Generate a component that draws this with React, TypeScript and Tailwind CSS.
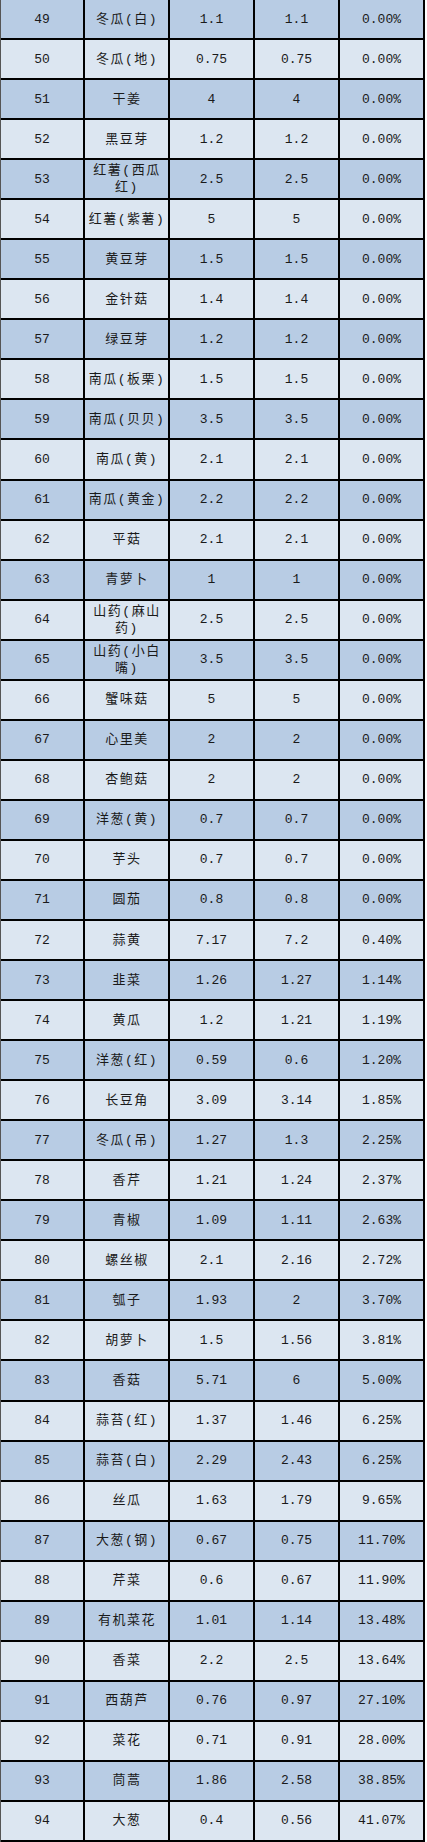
import React from 'react';

const rows: [number, string, string, string, string][] = [
  [49, '冬瓜(白)', '1.1', '1.1', '0.00%'],
  [50, '冬瓜(地)', '0.75', '0.75', '0.00%'],
  [51, '干姜', '4', '4', '0.00%'],
  [52, '黑豆芽', '1.2', '1.2', '0.00%'],
  [53, '红薯(西瓜红)', '2.5', '2.5', '0.00%'],
  [54, '红薯(紫薯)', '5', '5', '0.00%'],
  [55, '黄豆芽', '1.5', '1.5', '0.00%'],
  [56, '金针菇', '1.4', '1.4', '0.00%'],
  [57, '绿豆芽', '1.2', '1.2', '0.00%'],
  [58, '南瓜(板栗)', '1.5', '1.5', '0.00%'],
  [59, '南瓜(贝贝)', '3.5', '3.5', '0.00%'],
  [60, '南瓜(黄)', '2.1', '2.1', '0.00%'],
  [61, '南瓜(黄金)', '2.2', '2.2', '0.00%'],
  [62, '平菇', '2.1', '2.1', '0.00%'],
  [63, '青萝卜', '1', '1', '0.00%'],
  [64, '山药(麻山药)', '2.5', '2.5', '0.00%'],
  [65, '山药(小白嘴)', '3.5', '3.5', '0.00%'],
  [66, '蟹味菇', '5', '5', '0.00%'],
  [67, '心里美', '2', '2', '0.00%'],
  [68, '杏鲍菇', '2', '2', '0.00%'],
  [69, '洋葱(黄)', '0.7', '0.7', '0.00%'],
  [70, '芋头', '0.7', '0.7', '0.00%'],
  [71, '圆茄', '0.8', '0.8', '0.00%'],
  [72, '蒜黄', '7.17', '7.2', '0.40%'],
  [73, '韭菜', '1.26', '1.27', '1.14%'],
  [74, '黄瓜', '1.2', '1.21', '1.19%'],
  [75, '洋葱(红)', '0.59', '0.6', '1.20%'],
  [76, '长豆角', '3.09', '3.14', '1.85%'],
  [77, '冬瓜(吊)', '1.27', '1.3', '2.25%'],
  [78, '香芹', '1.21', '1.24', '2.37%'],
  [79, '青椒', '1.09', '1.11', '2.63%'],
  [80, '螺丝椒', '2.1', '2.16', '2.72%'],
  [81, '瓠子', '1.93', '2', '3.70%'],
  [82, '胡萝卜', '1.5', '1.56', '3.81%'],
  [83, '香菇', '5.71', '6', '5.00%'],
  [84, '蒜苔(红)', '1.37', '1.46', '6.25%'],
  [85, '蒜苔(白)', '2.29', '2.43', '6.25%'],
  [86, '丝瓜', '1.63', '1.79', '9.65%'],
  [87, '大葱(钢)', '0.67', '0.75', '11.70%'],
  [88, '芹菜', '0.6', '0.67', '11.90%'],
  [89, '有机菜花', '1.01', '1.14', '13.48%'],
  [90, '香菜', '2.2', '2.5', '13.64%'],
  [91, '西葫芦', '0.76', '0.97', '27.10%'],
  [92, '菜花', '0.71', '0.91', '28.00%'],
  [93, '茼蒿', '1.86', '2.58', '38.85%'],
  [94, '大葱', '0.4', '0.56', '41.07%'],
];

const cell =
  'flex items-center justify-center text-center border-r-2 border-b-2 border-black leading-[17px]';

export default function App() {
  return (
    <div className="w-[427px] h-[1842px] bg-white font-['Liberation_Mono','Noto_Sans_CJK_SC',monospace] text-[13px] text-[#1a1a1a]">
      <div className="grid grid-rows-[repeat(46,minmax(0,1fr))] h-[1842px] w-[425px] border-l border-[#555]">
        {rows.map(([no, name, a, b, pct]) => (
          <div
            key={no}
            className={
              'grid grid-cols-[84px_85px_85px_85px_85px] ' +
              (no % 2 === 1 ? 'bg-[#b8cce4]' : 'bg-[#dce6f1]')
            }
          >
            <div className={cell}>{no}</div>
            <div className={cell + ' tracking-[1.5px] pl-[1px]'}>{name}</div>
            <div className={cell}>{a}</div>
            <div className={cell}>{b}</div>
            <div className={cell}>{pct}</div>
          </div>
        ))}
      </div>
    </div>
  );
}
